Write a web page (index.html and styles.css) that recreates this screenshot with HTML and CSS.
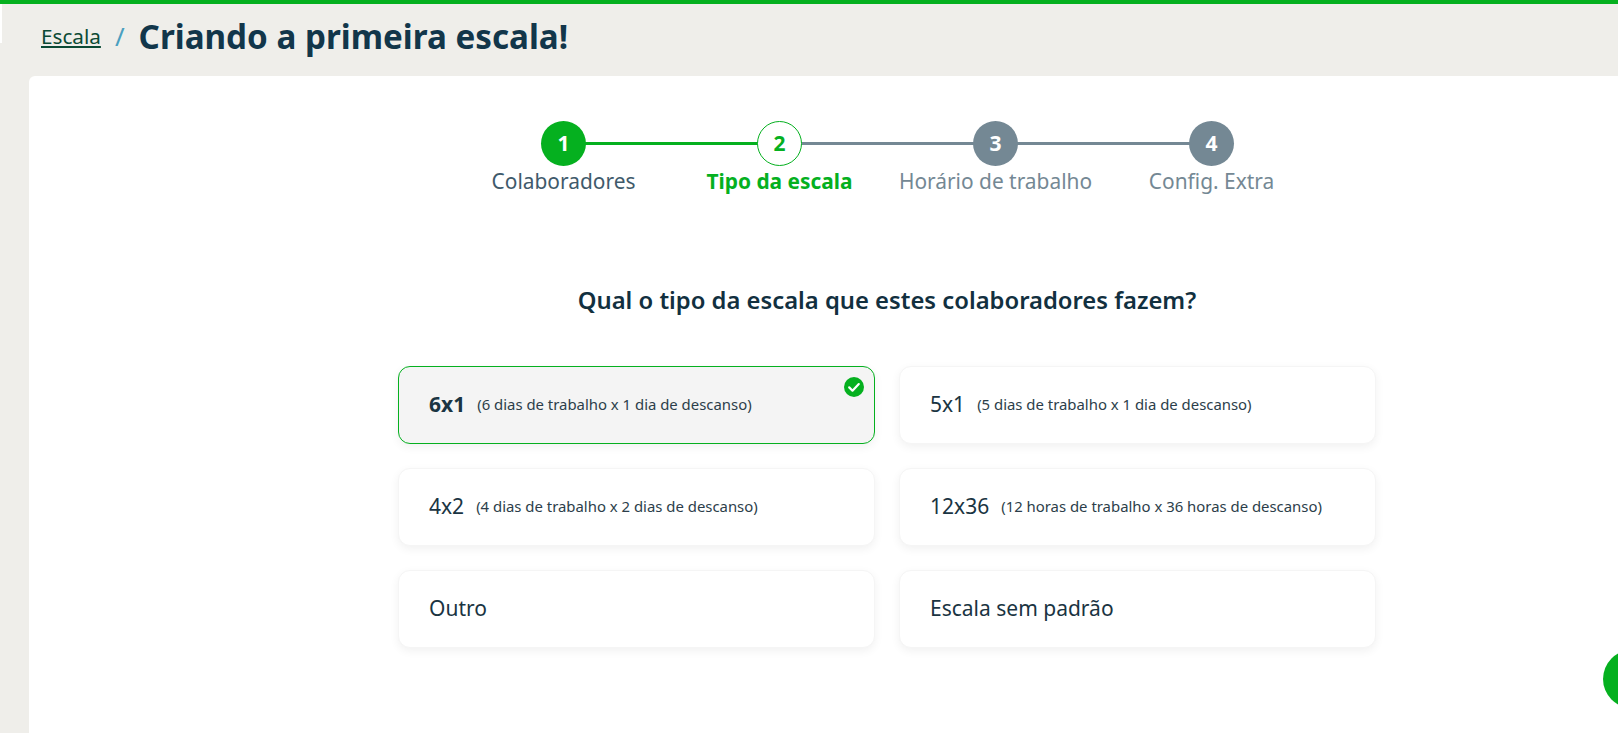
FILE: index.html
```html
<!DOCTYPE html>
<html lang="pt-BR">
<head>
  <meta charset="UTF-8" />
  <title>Criando a primeira escala!</title>
  <link rel="stylesheet" href="styles.css">
</head>
<body>
  <div class="sliver"></div>
  <header class="top">
    <a class="crumb" href="#">Escala</a>
    <span class="slash">/</span>
    <h1>Criando a primeira escala!</h1>
  </header>

  <main class="panel">
    <div class="steps">
      <div class="step done">
        <div class="dot">1</div>
        <div class="step-label">Colaboradores</div>
      </div>
      <div class="step current">
        <div class="dot">2</div>
        <div class="step-label">Tipo da escala</div>
      </div>
      <div class="step">
        <div class="dot">3</div>
        <div class="step-label">Horário de trabalho</div>
      </div>
      <div class="step">
        <div class="dot">4</div>
        <div class="step-label">Config. Extra</div>
      </div>
    </div>

    <h2 class="question">Qual o tipo da escala que estes colaboradores fazem?</h2>

    <div class="options">
      <div class="option selected">
        <span class="option-name">6x1</span>
        <span class="option-desc">(6 dias de trabalho x 1 dia de descanso)</span>
        <svg class="check" viewBox="0 0 20 20" width="20" height="20">
          <circle cx="10" cy="10" r="10" fill="#05b01f"/>
          <path d="M5.2 10.4l3.3 3.3 6.3-6.6" fill="none" stroke="#fff" stroke-width="2.2" stroke-linecap="round" stroke-linejoin="round"/>
        </svg>
      </div>
      <div class="option">
        <span class="option-name">5x1</span>
        <span class="option-desc">(5 dias de trabalho x 1 dia de descanso)</span>
      </div>
      <div class="option">
        <span class="option-name">4x2</span>
        <span class="option-desc">(4 dias de trabalho x 2 dias de descanso)</span>
      </div>
      <div class="option">
        <span class="option-name">12x36</span>
        <span class="option-desc">(12 horas de trabalho x 36 horas de descanso)</span>
      </div>
      <div class="option">
        <span class="option-text">Outro</span>
      </div>
      <div class="option">
        <span class="option-text">Escala sem padrão</span>
      </div>
    </div>
  </main>

  <div class="fab-clip"><div class="fab"></div></div>
</body>
</html>
```

FILE: styles.css
```css
* { margin: 0; padding: 0; box-sizing: border-box; }

html, body {
  height: 100%;
  overflow: hidden;
}

body {
  position: relative;
  display: flex;
  flex-direction: column;
  font-family: 'Noto Sans', 'Open Sans', sans-serif;
  background: #efeeea;
  border-top: 4px solid #05b01f;
  color: #12303f;
}

.sliver {
  position: absolute;
  top: 0;
  left: 0;
  width: 2px;
  height: 39px;
  background: #fff;
}

.top {
  flex: none;
  height: 72px;
  padding: 0 0 8px 41px;
  display: flex;
  align-items: center;
}

.crumb {
  color: #0b4a35;
  font-size: 20.7px;
  text-decoration: underline;
}

.slash {
  margin: 0 14px;
  color: #4a9fc0;
  font-size: 26px;
}

h1 {
  color: #12364a;
  font-size: 33.2px;
  font-weight: 700;
}

.panel {
  flex: 1;
  margin-left: 29px;
  padding: 45px 0 0 127px;
  background: #fff;
  border-radius: 6px 0 0 0;
  display: flex;
  flex-direction: column;
  align-items: center;
}

.steps {
  display: flex;
  margin-left: 1px;
}

.step {
  position: relative;
  width: 216px;
  display: flex;
  flex-direction: column;
  align-items: center;
  color: #748894;
}

/* linha entre os passos */
.step:not(:last-child)::after {
  content: '';
  position: absolute;
  top: 21px;
  left: 108px;
  width: 216px;
  height: 3px;
  background: #748894;
}

.step.done::after { background: #05b01f; }

.dot {
  position: relative;
  z-index: 1;
  width: 45px;
  height: 45px;
  padding-bottom: 2px;
  border-radius: 50%;
  background: #748894;
  color: #fff;
  font-size: 21px;
  font-weight: 700;
  display: flex;
  align-items: center;
  justify-content: center;
}

.step-label {
  font-size: 20.9px;
  line-height: 30px;
  white-space: nowrap;
}

.step.done .dot { background: #05b01f; }
.step.done .step-label { color: #3f5a6b; }

.step.current .dot {
  background: #fff;
  border: 1px solid #05b01f;
  color: #05b01f;
}
.step.current .step-label {
  color: #05b01f;
  font-weight: 700;
}

.question {
  margin-top: 89px;
  font-size: 23.8px;
  font-weight: 600;
  line-height: 30px;
  color: #12303f;
}

.options {
  margin-top: 51px;
  display: grid;
  grid-template-columns: 477px 477px;
  grid-auto-rows: 78px;
  gap: 24px;
}

.option {
  position: relative;
  padding: 0 0 2px 30px;
  border: 1px solid #f5f5f5;
  border-radius: 12px;
  background: #fff;
  box-shadow: 0 3px 10px rgba(0, 0, 0, 0.06);
  display: flex;
  align-items: center;
}

.option.selected {
  background: #f4f4f4;
  border-color: #05b01f;
}

.option-name {
  margin-right: 12px;
  font-size: 21px;
  color: #1a3442;
}

.selected .option-name { font-weight: 700; }

.option-desc {
  font-size: 14.9px;
  color: #2c3e4a;
}

.option-text {
  font-size: 21px;
  color: #1a3442;
}

.check {
  position: absolute;
  top: 10px;
  right: 10px;
}

.fab-clip {
  position: absolute;
  top: 646px;
  right: 0;
  width: 15px;
  height: 58px;
  overflow: hidden;
}

.fab {
  width: 58px;
  height: 58px;
  border-radius: 50%;
  background: #05b01f;
}
```
